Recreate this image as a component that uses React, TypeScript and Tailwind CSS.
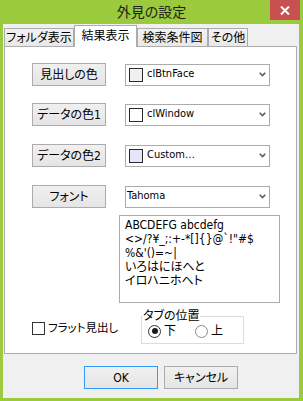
import { Fragment } from "react"

const ui = "[font-family:DejaVu_Sans_Condensed,Liberation_Sans,Noto_Sans_CJK_JP,sans-serif] [font-feature-settings:'palt']"

const tabs = [
  { label: "フォルダ表示", w: "w-[70px]" },
  { label: "結果表示", w: "w-[63px]", active: true },
  { label: "検索条件図", w: "w-[71px]" },
  { label: "その他", w: "w-[40px]" },
]

const rows = [
  { label: "見出しの色", swatch: "#F0F0F0", value: "clBtnFace", mt: "mt-[16px]" },
  { label: "データの色1", swatch: "#FFFFFF", value: "clWindow", mt: "mt-[17px]" },
  { label: "データの色2", swatch: "#E6E6FA", value: "Custom…", mt: "mt-[18px]" },
  { label: "フォント", value: "Tahoma", mt: "mt-[18px]" },
]

const preview = [
  "ABCDEFG abcdefg",
  "<>/?¥_;:+-*[]{}@`!\"#$",
  "%&'()=~|",
  "いろはにほへと",
  "イロハニホヘト",
]

function Chevron() {
  return (
    <svg width="7" height="5" viewBox="0 0 7 5" className="shrink-0">
      <path d="M0.7 0.7 L3.5 3.6 L6.3 0.7" fill="none" stroke="#5f5f5f" strokeWidth="1.6" />
    </svg>
  )
}

function WinButton({ label, primary }: { label: string; primary?: boolean }) {
  return (
    <button
      className={`flex h-[23px] w-[74px] items-center justify-center border bg-gradient-to-b from-[#F0F0F0] to-[#E5E5E5] text-[12px] leading-none text-black ${
        primary ? "border-[#3399FF]" : "border-[#ACACAC]"
      }`}
    >
      {label}
    </button>
  )
}

function Radio({ label, checked }: { label: string; checked?: boolean }) {
  return (
    <div className="flex items-center gap-[3px]">
      <span
        className={`flex h-[13px] w-[13px] items-center justify-center rounded-full border bg-white ${
          checked ? "border-[#333]" : "border-[#8a8a8a]"
        }`}
      >
        {checked && <span className="h-[6px] w-[6px] rounded-full bg-[#1a1a1a]" />}
      </span>
      <span>{label}</span>
    </div>
  )
}

export default function App() {
  return (
    <div className={`flex h-[401px] w-[303px] flex-col bg-[#9BCA3D] text-[12px] text-black ${ui}`}>
      {/* title bar */}
      <div className="flex h-[24px] items-start">
        <div className="w-[33px]" />
        <div className="flex h-[24px] flex-1 items-center justify-center text-[14px] text-[#1e1e1e]">
          外見の設定
        </div>
        <div className="mr-[3px] flex h-[20px] w-[30px] items-center justify-center bg-[#C75050]">
          <svg width="10" height="9" viewBox="0 0 10 9">
            <path d="M1 0.5 L9 8.5 M9 0.5 L1 8.5" stroke="#fff" strokeWidth="2" />
          </svg>
        </div>
      </div>

      {/* client area */}
      <div className="mb-[3px] ml-[3px] mr-[4px] flex flex-1 flex-col bg-[#F0F0F0]">
        <div className="flex h-[22px] items-end pl-px">
          {tabs.map((t) =>
            t.active ? (
              <div
                key={t.label}
                className={`${t.w} relative z-10 -mb-px flex h-[22px] items-center justify-center border border-b-0 border-[#ACACAC] bg-white pb-px`}
              >
                {t.label}
              </div>
            ) : (
              <div
                key={t.label}
                className={`${t.w} flex h-[18px] items-center justify-center border border-b-0 border-[#ACACAC] bg-gradient-to-b from-[#F2F2F2] to-[#E8E8E8] leading-none`}
              >
                {t.label}
              </div>
            )
          )}
        </div>

        <div className="ml-px mr-[2px] flex h-[308px] flex-col border border-[#ACACAC] bg-white">
          {rows.map((r) => (
            <div key={r.label} className={`${r.mt} flex items-center pl-[27px]`}>
              <WinButton label={r.label} />
              <div className="ml-[19px] flex h-[22px] w-[145px] items-center border border-[#ABABAB] bg-white pr-[3px]">
                {r.swatch ? (
                  <Fragment>
                    <span
                      className="ml-[3px] h-[14px] w-[14px] shrink-0 border border-[#2a2a2a]"
                      style={{ backgroundColor: r.swatch }}
                    />
                    <span className="ml-[4px] flex-1 text-[11px]">{r.value}</span>
                  </Fragment>
                ) : (
                  <span className="ml-[1px] flex-1 text-[11px]">{r.value}</span>
                )}
                <Chevron />
              </div>
            </div>
          ))}

          <div className="ml-[114px] mt-[7px] h-[88px] w-[161px] border border-[#ABABAB] pl-[5px] pt-[2px] text-[12px] leading-[14px]">
            {preview.map((line) => (
              <div key={line} className="whitespace-pre">
                {line}
              </div>
            ))}
          </div>

          <div className="mt-[6px] flex items-start pl-[27px]">
            <label className="mt-[12px] flex w-[109px] items-center gap-[3px] leading-[14px]">
              <span className="h-[13px] w-[13px] shrink-0 border border-[#333] bg-white" />
              <span className="text-[11.5px]">フラット見出し</span>
            </label>
            <fieldset className="w-[103px] border border-[#DCDCDC] pb-[5px] pl-px leading-[14px]">
              <legend className="px-0">タブの位置</legend>
              <div className="ml-[5px] mt-px flex gap-[19px]">
                <Radio label="下" checked />
                <Radio label="上" />
              </div>
            </fieldset>
          </div>
        </div>

        <div className="flex gap-[6px] pl-[81px] pt-[12px]">
          <WinButton label="OK" primary />
          <WinButton label="キャンセル" />
        </div>
      </div>
    </div>
  )
}
